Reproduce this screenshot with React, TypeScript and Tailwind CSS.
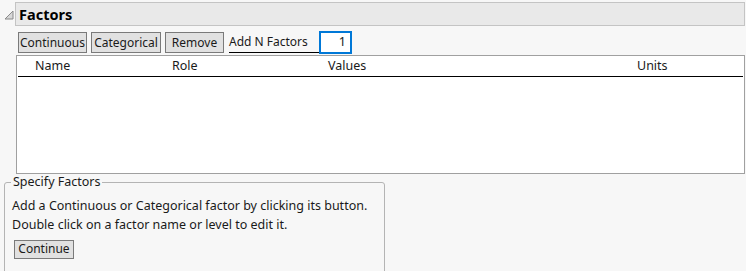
export default function App() {
  return (
    <div
      className="w-[746px] h-[271px] overflow-hidden bg-[#f7f7f7] text-[12.5px] text-[#1a1a1a] relative"
      style={{ fontFamily: '"Noto Sans", "Open Sans", sans-serif' }}
    >
      {/* Outline header */}
      <div className="flex items-center pt-[2px]">
        <div className="w-[15px] h-[23px] flex items-center justify-center">
          <svg width="10" height="10" viewBox="0 0 10 10" className="mt-[2px] ml-[2px]">
            <path d="M9 1 L9 9 L1 9 Z" fill="#d8d8d8" stroke="#8a8a8a" strokeWidth="1" />
          </svg>
        </div>
        <div className="flex-1 h-[24px] mr-[1px] bg-[#e9e9e9] border border-[#c4c4c4] flex items-center pl-[3px]">
          <span className="font-bold text-[14.5px] text-black leading-none">Factors</span>
        </div>
      </div>

      {/* Toolbar */}
      <div className="flex items-start ml-[18px] mt-[6px] h-[22px] text-[12px]">
        <button className="w-[69px] h-[21px] bg-[#e1e1e1] border border-[#7a7a7a] leading-none">Continuous</button>
        <button className="w-[70px] h-[21px] ml-[4px] bg-[#e1e1e1] border border-[#7a7a7a] leading-none">Categorical</button>
        <button className="w-[59px] h-[21px] ml-[4px] bg-[#e1e1e1] border border-[#7a7a7a] leading-none">Remove</button>
        <div className="ml-[5px] w-[90px] h-[21px] border-b border-black flex items-center leading-none">Add N Factors</div>
        <div className="w-[33px] h-[23px] border-2 border-[#0078d7] bg-white flex items-center justify-end pr-[4px] leading-none mt-[-1px] text-[12.5px]">1</div>
      </div>

      {/* Factors table */}
      <div className="ml-[16px] mr-[1px] mt-[1px] h-[119px] bg-white border border-[#a0a0a0]">
        <div className="flex h-[21px] items-center mx-[1px] border-b border-black leading-none">
          <span className="ml-[17px] w-[137px]">Name</span>
          <span className="w-[156px]">Role</span>
          <span className="w-[309px]">Values</span>
          <span>Units</span>
        </div>
      </div>

      {/* Specify Factors group */}
      <fieldset className="ml-[4px] mt-[2px] w-[381px] h-[110px] border border-[#b4b4b4] rounded-[3px] px-[7px] pt-0">
        <legend className="px-[2px] ml-[-1px] leading-none">Specify Factors</legend>
        <div className="leading-[19px] mt-[7px] whitespace-nowrap">Add a Continuous or Categorical factor by clicking its button.</div>
        <div className="leading-[19px] whitespace-nowrap">Double click on a factor name or level to edit it.</div>
        <button className="block mt-[6px] ml-[2px] w-[60px] h-[19px] bg-[#e1e1e1] border border-[#7a7a7a] leading-none text-[12px]">Continue</button>
      </fieldset>
    </div>
  );
}
